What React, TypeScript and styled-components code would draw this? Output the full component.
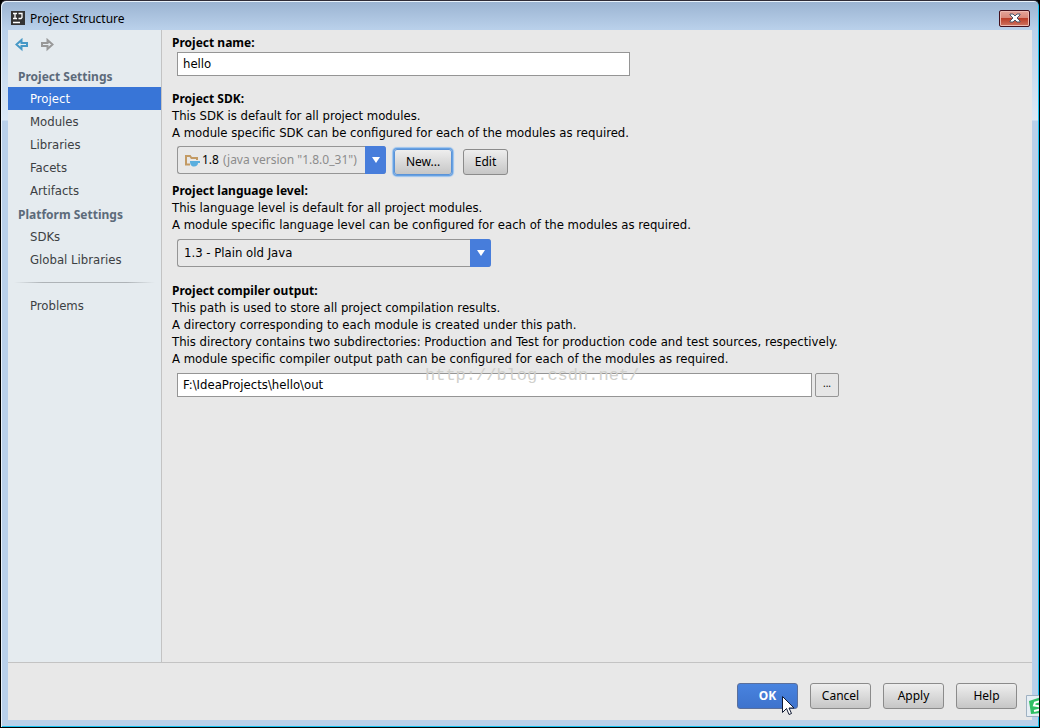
import React from "react";
import styled, { createGlobalStyle, css } from "styled-components";

const uiFont = `"Noto Sans", "Open Sans", sans-serif`;
const textFont = `"DejaVu Sans Condensed", "DejaVu Sans", sans-serif`;

const Global = createGlobalStyle`
  * { box-sizing: border-box; }
  body { margin: 0; background: #000; }
  body, button, input, select { font-family: ${uiFont}; font-size: 12px; line-height: 17px; color: #000; }
`;

const Window = styled.div`
  position: relative;
  display: flex;
  flex-direction: column;
  min-height: 100vh;
  padding: 0 7px 7px;
  border: 1px solid #000;
  border-top-color: #2f2c37;
  border-radius: 6px 6px 0 0;
  background: linear-gradient(#9ab3d1 0, #b9d0ea 28px, #dce9f6 119px, #b9d0ea 120px);
  box-shadow: inset 1px 1px 0 #e9f2fb, inset -1px -1px 0 #16c2f0;
  overflow: hidden;
`;

const TitleBar = styled.header`
  display: flex;
  align-items: center;
  height: 29px;
  padding: 5px 2px 0 3px;
  gap: 5px;
`;

const Title = styled.h1`
  flex: 1;
  margin: 0;
  font-size: 12px;
  font-weight: 400;
`;

const CloseButton = styled.button`
  display: flex;
  align-items: center;
  justify-content: center;
  width: 31px;
  height: 17px;
  padding: 0;
  border: 1px solid #43101c;
  border-radius: 2px;
  background: linear-gradient(#e5a599 0, #d98678 48%, #bb3e29 50%, #cf7460 100%);
  box-shadow: inset 0 0 0 1px #eeb9b0;
`;

const Body = styled.div`
  flex: 1;
  display: flex;
  border-bottom: 1px solid #c3c3c3;
`;

const Sidebar = styled.nav`
  flex: 0 0 154px;
  border-right: 1px solid #c3c3c3;
  background: #e5ebef;
`;

const History = styled.div`
  display: flex;
  gap: 11px;
  height: 34px;
  padding: 8px 7px 0;
`;

const IconButton = styled.button`
  display: flex;
  width: 14px;
  height: 14px;
  padding: 0;
  border: 0;
  background: none;
`;

const GroupTitle = styled.h2`
  height: 23px;
  margin: 0;
  padding: 1px 0 0 10px;
  font-size: 12px;
  line-height: 23px;
  color: #5c6a7a;
`;

const NavLink = styled.a<{ $active?: boolean }>`
  display: block;
  height: 23px;
  padding-left: 22px;
  font-family: ${textFont};
  font-size: 13px;
  line-height: 23px;
  text-decoration: none;
  color: ${(p) => (p.$active ? "#fff" : "#3c4043")};
  background: ${(p) => (p.$active ? "#3875d7" : "none")};
`;

const Divider = styled.hr`
  height: 1px;
  margin: 11px 6px;
  border: 0;
  background: linear-gradient(90deg, transparent, #aeb3b7 20%, #aeb3b7 80%, transparent);
`;

const Content = styled.main`
  flex: 1;
  min-width: 0;
  padding: 4px 10px;
  background: #e8e8e8;
`;

const Section = styled.section<{ $gap: number }>`
  max-width: 667px;
  margin-bottom: ${(p) => p.$gap}px;
`;

const Heading = styled.label`
  display: block;
  font-weight: 700;
`;

const Note = styled.p`
  margin: 0;
  font-family: ${textFont};
  font-size: 13px;
  white-space: nowrap;
`;

const Controls = styled.div<{ $top: number }>`
  display: flex;
  align-items: flex-start;
  margin-top: ${(p) => p.$top}px;
  padding-left: 5px;
`;

const TextField = styled.input<{ $width?: number }>`
  flex: 0 1 ${(p) => (p.$width ? `${p.$width}px` : "100%")};
  min-width: 0;
  height: 24px;
  padding: 0 5px 1px;
  border: 1px solid #959595;
  background: #fff;
  outline: 0;
  font-family: ${textFont};
  font-size: 13px;
`;

const Combo = styled.div<{ $width: number }>`
  display: flex;
  align-items: center;
  width: ${(p) => p.$width}px;
  height: 28px;
  padding-left: 6px;
  border: 1px solid #959595;
  border-right: 0;
  border-radius: 3px;
  background: #e8e8e8;
`;

const Select = styled.select<{ $muted?: boolean }>`
  flex: 1;
  min-width: 0;
  height: 26px;
  padding: 0 0 1px;
  border: 0;
  appearance: none;
  outline: 0;
  background: none;
  color: ${(p) => (p.$muted ? "#8c8c8c" : "#000")};
  font-family: ${(p) => (p.$muted ? uiFont : textFont)};
  font-size: ${(p) => (p.$muted ? 12 : 13)}px;
`;

const Version = styled.span`
  margin: 0 4px 0 2px;
  padding-bottom: 1px;
`;

const Arrow = styled.span`
  display: flex;
  align-items: center;
  justify-content: center;
  align-self: stretch;
  flex: 0 0 21px;
  margin: -1px 0;
  border-radius: 0 3px 3px 0;
  background: #477ddb;
`;

const Button = styled.button<{ $kind?: "primary" | "focused"; $width: number }>`
  width: ${(p) => p.$width}px;
  height: 26px;
  padding: 0 0 2px;
  border: 1px solid #8b8b8b;
  border-radius: 3px;
  background: linear-gradient(#eeeeee, #c6c6c6);
  ${(p) =>
    p.$kind === "primary" &&
    css`
      border-color: #5a6f9b;
      background: linear-gradient(#4883df, #3e73cd);
      color: #fff;
      font-weight: 700;
    `}
  ${(p) =>
    p.$kind === "focused" &&
    css`
      border-color: #5a93d8;
      box-shadow: 0 0 0 1px #66a1e2, 0 0 1px 2px #9cc3ee;
    `}
`;

const SdkButtons = styled.div`
  display: flex;
  gap: 11px;
  padding: 3px 0 0 8px;
`;

const BrowseButton = styled.button`
  flex: 0 0 24px;
  height: 24px;
  margin-left: 3px;
  padding: 0 0 4px;
  border: 1px solid #959595;
  border-radius: 2px;
  background: #e6e6e6;
  font-size: 10px;
`;

const Footer = styled.footer`
  display: flex;
  justify-content: flex-end;
  gap: 12px;
  padding: 20px 15px 11px;
  background: #e8e8e8;
`;

const Watermark = styled.span`
  position: absolute;
  left: 424px;
  top: 366px;
  font: 17px/17px "Liberation Mono", monospace;
  color: #d0d0cc;
  pointer-events: none;
`;

const Pointer = styled.svg`
  position: absolute;
  right: 245px;
  bottom: 12px;
`;

const TrayIcon = styled.svg`
  position: absolute;
  right: -1px;
  bottom: 10px;
`;

const DownArrow = () => (
  <Arrow>
    <svg width="8" height="6"><path d="M0 0h8L4 6z" fill="#fff" /></svg>
  </Arrow>
);

const settings = ["Project", "Modules", "Libraries", "Facets", "Artifacts"];
const platform = ["SDKs", "Global Libraries"];

export default function App() {
  return (
    <>
      <Global />
      <Window>
        <TitleBar>
          <svg width="14" height="14"><path d="M0 0h14v14H0z" fill="#333" /><path d="M2 2.5h4M4 2.5v5M2 7.500h4M7.500 2.500H11v4l-1 1H7.500M2 11.500h7" fill="none" stroke="#fff" strokeWidth="1.300" /></svg>
          <Title>Project Structure</Title>
          <CloseButton aria-label="Close">
            <svg width="12" height="10"><path d="M1 1h3l2 2 2-2h3v1L8 5l3 3v1H8L6 7 4 9H1V8l3-3-3-3z" fill="#fff" stroke="#4b5466" /></svg>
          </CloseButton>
        </TitleBar>
        <Body>
          <Sidebar>
            <History>
              <IconButton aria-label="Back"><svg width="14" height="14"><path d="M1.500 6.500l5-4.500V5H12v3H6.500v3z" fill="none" stroke="#4698c6" strokeWidth="2" /></svg></IconButton>
              <IconButton aria-label="Forward"><svg width="14" height="14"><path d="M12.500 6.500l-5-4.500V5H2v3h5.500v3z" fill="none" stroke="#989898" strokeWidth="2" /></svg></IconButton>
            </History>
            <GroupTitle>Project Settings</GroupTitle>
            {settings.map((s) => <NavLink key={s} href="#" $active={s === "Project"}>{s}</NavLink>)}
            <GroupTitle>Platform Settings</GroupTitle>
            {platform.map((s) => <NavLink key={s} href="#">{s}</NavLink>)}
            <Divider />
            <NavLink href="#">Problems</NavLink>
          </Sidebar>
          <Content>
            <Section $gap={14}>
              <Heading htmlFor="name">Project name:</Heading>
              <Controls $top={1}><TextField id="name" $width={453} defaultValue="hello" /></Controls>
            </Section>
            <Section $gap={7}>
              <Heading htmlFor="sdk">Project SDK:</Heading>
              <Note>This SDK is default for all project modules.</Note>
              <Note>A module specific SDK can be configured for each of the modules as required.</Note>
              <Controls $top={5}>
                <Combo $width={209}>
                  <svg width="16" height="14"><path d="M2 12V3h4l1.500 2H13v2M1 11.500h5" fill="none" stroke="#c39a63" strokeWidth="2" /><path d="M6 8h10v2h-2c0 2-1.500 3.500-4 3.500S6 12 6 8z" fill="#59aede" /></svg>
                  <Version>1.8</Version>
                  <Select id="sdk" $muted><option>(java version "1.8.0_31")</option></Select>
                  <DownArrow />
                </Combo>
                <SdkButtons>
                  <Button $width={58} $kind="focused">New...</Button>
                  <Button $width={45}>Edit</Button>
                </SdkButtons>
              </Controls>
            </Section>
            <Section $gap={15}>
              <Heading htmlFor="level">Project language level:</Heading>
              <Note>This language level is default for all project modules.</Note>
              <Note>A module specific language level can be configured for each of the modules as required.</Note>
              <Controls $top={6}>
                <Combo $width={314}>
                  <Select id="level"><option>1.3 - Plain old Java</option></Select>
                  <DownArrow />
                </Combo>
              </Controls>
            </Section>
            <Section $gap={0}>
              <Heading htmlFor="out">Project compiler output:</Heading>
              <Note>This path is used to store all project compilation results.</Note>
              <Note>A directory corresponding to each module is created under this path.</Note>
              <Note>This directory contains two subdirectories: Production and Test for production code and test sources, respectively.</Note>
              <Note>A module specific compiler output path can be configured for each of the modules as required.</Note>
              <Controls $top={6}>
                <TextField id="out" defaultValue="F:\IdeaProjects\hello\out" />
                <BrowseButton aria-label="Browse">...</BrowseButton>
              </Controls>
            </Section>
          </Content>
        </Body>
        <Footer>
          <Button $width={61} $kind="primary">OK</Button>
          <Button $width={61}>Cancel</Button>
          <Button $width={61}>Apply</Button>
          <Button $width={61}>Help</Button>
        </Footer>
        <Watermark>http://blog.csdn.net/</Watermark>
        <Pointer width="12" height="19"><path d="M.5.5v16l4-4 2.500 6 2.500-1-2.500-5.500H12z" fill="#fff" stroke="#111a33" /></Pointer>
        <TrayIcon width="14" height="22"><path d="M.5.500H15v21H.500z" fill="#e6eef4" stroke="#9fb1c2" /><path d="M3 6l12-4v16l-10 1z" fill="#2fbf63" /><path d="M15 6l-6 1.500-1 3 6 1v3l-6 1.500" fill="none" stroke="#fff" strokeWidth="2" /></TrayIcon>
      </Window>
    </>
  );
}
